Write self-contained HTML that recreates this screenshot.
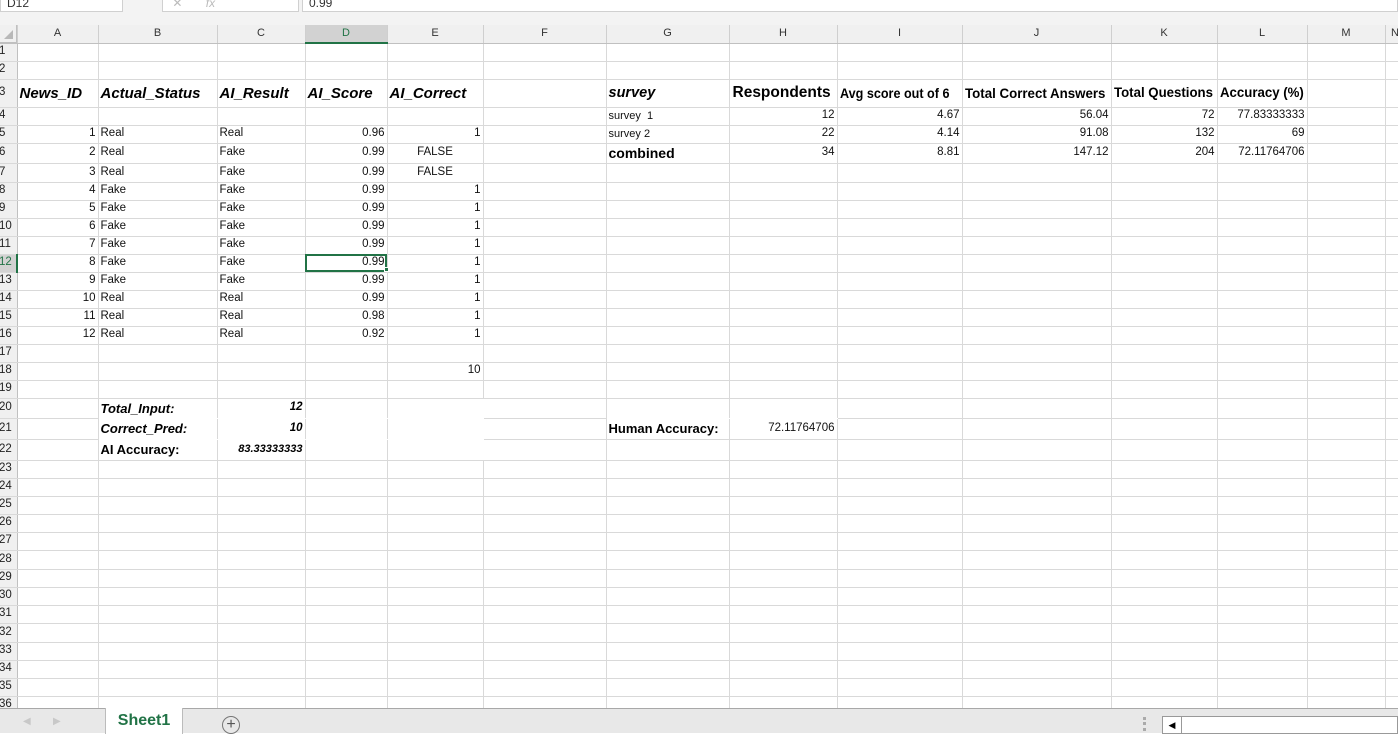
<!DOCTYPE html>
<html><head><meta charset="utf-8"><style>
*{margin:0;padding:0;box-sizing:border-box}
body{width:1398px;height:733px;overflow:hidden;background:#fff;font-family:"Liberation Sans",Arial,sans-serif;position:relative}
#top{position:absolute;left:0;top:0;width:1398px;height:25px;background:#f3f3f3}
#top .b{position:absolute;top:0;height:12px;background:#fff;border:1px solid #d0d0d0;border-top:none;font-size:12px;color:#333;line-height:6px;padding-left:6px;overflow:hidden}
table{position:absolute;left:0;top:25px;border-collapse:collapse;table-layout:fixed;width:1405px}
td{border-right:1px solid #d9d9d9;border-bottom:1px solid #d9d9d9;font-size:11.5px;color:#111;white-space:nowrap;overflow:visible;padding:0 2px;line-height:1}
tr.h td{background:#f0f0f0;text-align:center;color:#333;font-size:11px;border-right:1px solid #cfcfcf;border-bottom:1px solid #c0c0c0}
td.rh{background:#f0f0f0;font-size:11.5px;color:#222;padding:0;border-right:1px solid #c0c0c0;text-align:left;text-indent:-1px}
.r{text-align:right}
.hd{font-weight:bold;font-style:italic;font-size:15px;color:#000}
.nb{font-weight:bold;font-size:13.5px;color:#000}
.nb span{display:inline-block;transform-origin:left}
.bi{font-weight:bold;font-style:italic;font-size:13px;color:#000}
#tabs{position:absolute;left:0;top:708px;width:1398px;height:25px;background:#e8e8e8;border-top:1px solid #a8a8a8}
</style></head><body>
<div id="top">
<div class="b" style="left:0;width:123px">D12</div>
<div class="b" style="left:162px;width:137px;color:#bbb">&nbsp;✕ &nbsp;&nbsp;&nbsp;&nbsp;&nbsp; <i>fx</i></div>
<div class="b" style="left:302px;width:1096px">0.99</div>
</div>
<table>
<colgroup><col style="width:17px"><col style="width:81px"><col style="width:119px"><col style="width:88px"><col style="width:82px"><col style="width:96px"><col style="width:123px"><col style="width:123px"><col style="width:108px"><col style="width:125px"><col style="width:149px"><col style="width:106px"><col style="width:90px"><col style="width:78px"><col style="width:20px"></colgroup>
<tr class="h" style="height:18px"><td style="background:#f0f0f0"></td><td>A</td><td>B</td><td>C</td><td style="background:#d2d2d2;color:#217346;border-bottom:2px solid #217346">D</td><td>E</td><td>F</td><td>G</td><td>H</td><td>I</td><td>J</td><td>K</td><td>L</td><td>M</td><td>N</td></tr>
<tr style="height:18px"><td class="rh">1</td><td></td><td></td><td></td><td></td><td></td><td></td><td></td><td></td><td></td><td></td><td></td><td></td><td></td><td></td></tr>
<tr style="height:18px"><td class="rh">2</td><td></td><td></td><td></td><td></td><td></td><td></td><td></td><td></td><td></td><td></td><td></td><td></td><td></td><td></td></tr>
<tr style="height:28px"><td class="rh">3</td><td class="hd">News_ID</td><td class="hd">Actual_Status</td><td class="hd">AI_Result</td><td class="hd">AI_Score</td><td class="hd">AI_Correct</td><td></td><td class="hd" style="font-size:14.5px">survey</td><td class="nb" style="font-size:15.5px;padding:0 0 0 3px">Respondents</td><td class="nb"><span style="font-size:14px;transform:scaleX(.9)">Avg score out of 6</span></td><td class="nb"><span style="font-size:14px;transform:scaleX(.95)">Total Correct Answers</span></td><td class="nb"><span style="transform:scaleX(.98)">Total Questions</span></td><td class="nb"><span style="transform:scaleX(.98)">Accuracy (%)</span></td><td></td><td></td></tr>
<tr style="height:18px"><td class="rh">4</td><td></td><td></td><td></td><td></td><td></td><td></td><td style="font-size:11px">survey&nbsp; 1</td><td class="r">12</td><td class="r">4.67</td><td class="r">56.04</td><td class="r">72</td><td class="r">77.83333333</td><td></td><td></td></tr>
<tr style="height:18px"><td class="rh">5</td><td class="r">1</td><td>Real</td><td>Real</td><td class="r">0.96</td><td class="r">1</td><td></td><td style="font-size:11px">survey 2</td><td class="r">22</td><td class="r">4.14</td><td class="r">91.08</td><td class="r">132</td><td class="r">69</td><td></td><td></td></tr>
<tr style="height:20px"><td class="rh">6</td><td class="r">2</td><td>Real</td><td>Fake</td><td class="r">0.99</td><td style="text-align:center">FALSE</td><td></td><td class="nb" style="font-size:14px">combined</td><td class="r">34</td><td class="r">8.81</td><td class="r">147.12</td><td class="r">204</td><td class="r">72.11764706</td><td></td><td></td></tr>
<tr style="height:19px"><td class="rh">7</td><td class="r">3</td><td>Real</td><td>Fake</td><td class="r">0.99</td><td style="text-align:center">FALSE</td><td></td><td></td><td></td><td></td><td></td><td></td><td></td><td></td><td></td></tr>
<tr style="height:18px"><td class="rh">8</td><td class="r">4</td><td>Fake</td><td>Fake</td><td class="r">0.99</td><td class="r">1</td><td></td><td></td><td></td><td></td><td></td><td></td><td></td><td></td><td></td></tr>
<tr style="height:18px"><td class="rh">9</td><td class="r">5</td><td>Fake</td><td>Fake</td><td class="r">0.99</td><td class="r">1</td><td></td><td></td><td></td><td></td><td></td><td></td><td></td><td></td><td></td></tr>
<tr style="height:18px"><td class="rh">10</td><td class="r">6</td><td>Fake</td><td>Fake</td><td class="r">0.99</td><td class="r">1</td><td></td><td></td><td></td><td></td><td></td><td></td><td></td><td></td><td></td></tr>
<tr style="height:18px"><td class="rh">11</td><td class="r">7</td><td>Fake</td><td>Fake</td><td class="r">0.99</td><td class="r">1</td><td></td><td></td><td></td><td></td><td></td><td></td><td></td><td></td><td></td></tr>
<tr style="height:18px"><td class="rh" style="color:#217346;background:#d2d2d2;border-right:2px solid #217346">12</td><td class="r">8</td><td>Fake</td><td>Fake</td><td class="r" style="outline:2px solid #217346;outline-offset:-2px">0.99</td><td class="r">1</td><td></td><td></td><td></td><td></td><td></td><td></td><td></td><td></td><td></td></tr>
<tr style="height:18px"><td class="rh">13</td><td class="r">9</td><td>Fake</td><td>Fake</td><td class="r">0.99</td><td class="r">1</td><td></td><td></td><td></td><td></td><td></td><td></td><td></td><td></td><td></td></tr>
<tr style="height:18px"><td class="rh">14</td><td class="r">10</td><td>Real</td><td>Real</td><td class="r">0.99</td><td class="r">1</td><td></td><td></td><td></td><td></td><td></td><td></td><td></td><td></td><td></td></tr>
<tr style="height:18px"><td class="rh">15</td><td class="r">11</td><td>Real</td><td>Real</td><td class="r">0.98</td><td class="r">1</td><td></td><td></td><td></td><td></td><td></td><td></td><td></td><td></td><td></td></tr>
<tr style="height:18px"><td class="rh">16</td><td class="r">12</td><td>Real</td><td>Real</td><td class="r">0.92</td><td class="r">1</td><td></td><td></td><td></td><td></td><td></td><td></td><td></td><td></td><td></td></tr>
<tr style="height:18px"><td class="rh">17</td><td></td><td></td><td></td><td></td><td></td><td></td><td></td><td></td><td></td><td></td><td></td><td></td><td></td><td></td></tr>
<tr style="height:18px"><td class="rh">18</td><td></td><td></td><td></td><td></td><td class="r">10</td><td></td><td></td><td></td><td></td><td></td><td></td><td></td><td></td><td></td></tr>
<tr style="height:18px"><td class="rh">19</td><td></td><td></td><td></td><td></td><td></td><td></td><td></td><td></td><td></td><td></td><td></td><td></td><td></td><td></td></tr>
<tr style="height:20px"><td class="rh">20</td><td></td><td class="bi" style="border-bottom-color:#fff">Total_Input:</td><td class="bi r" style="font-size:11.5px;border-bottom-color:#fff">12</td><td style="border-bottom-color:#fff"></td><td style="border-bottom-color:#fff;border-right-color:#fff"></td><td></td><td style="border-bottom-color:#fff"></td><td style="border-bottom-color:#fff"></td><td></td><td></td><td></td><td></td><td></td><td></td></tr>
<tr style="height:21px"><td class="rh">21</td><td></td><td class="bi" style="border-bottom-color:#fff">Correct_Pred:</td><td class="bi r" style="font-size:11.5px;border-bottom-color:#fff">10</td><td style="border-bottom-color:#fff"></td><td style="border-bottom-color:#fff;border-right-color:#fff"></td><td></td><td class="nb" style="font-size:13px">Human Accuracy:</td><td class="r">72.11764706</td><td></td><td></td><td></td><td></td><td></td><td></td></tr>
<tr style="height:21px"><td class="rh">22</td><td></td><td class="nb" style="font-size:13px">AI Accuracy:</td><td class="bi r" style="font-size:11px">83.33333333</td><td></td><td style="border-right-color:#fff"></td><td></td><td></td><td></td><td></td><td></td><td></td><td></td><td></td><td></td></tr>
<tr style="height:18px"><td class="rh">23</td><td></td><td></td><td></td><td></td><td></td><td></td><td></td><td></td><td></td><td></td><td></td><td></td><td></td><td></td></tr>
<tr style="height:18px"><td class="rh">24</td><td></td><td></td><td></td><td></td><td></td><td></td><td></td><td></td><td></td><td></td><td></td><td></td><td></td><td></td></tr>
<tr style="height:18px"><td class="rh">25</td><td></td><td></td><td></td><td></td><td></td><td></td><td></td><td></td><td></td><td></td><td></td><td></td><td></td><td></td></tr>
<tr style="height:18px"><td class="rh">26</td><td></td><td></td><td></td><td></td><td></td><td></td><td></td><td></td><td></td><td></td><td></td><td></td><td></td><td></td></tr>
<tr style="height:18px"><td class="rh">27</td><td></td><td></td><td></td><td></td><td></td><td></td><td></td><td></td><td></td><td></td><td></td><td></td><td></td><td></td></tr>
<tr style="height:19px"><td class="rh">28</td><td></td><td></td><td></td><td></td><td></td><td></td><td></td><td></td><td></td><td></td><td></td><td></td><td></td><td></td></tr>
<tr style="height:18px"><td class="rh">29</td><td></td><td></td><td></td><td></td><td></td><td></td><td></td><td></td><td></td><td></td><td></td><td></td><td></td><td></td></tr>
<tr style="height:18px"><td class="rh">30</td><td></td><td></td><td></td><td></td><td></td><td></td><td></td><td></td><td></td><td></td><td></td><td></td><td></td><td></td></tr>
<tr style="height:18px"><td class="rh">31</td><td></td><td></td><td></td><td></td><td></td><td></td><td></td><td></td><td></td><td></td><td></td><td></td><td></td><td></td></tr>
<tr style="height:19px"><td class="rh">32</td><td></td><td></td><td></td><td></td><td></td><td></td><td></td><td></td><td></td><td></td><td></td><td></td><td></td><td></td></tr>
<tr style="height:18px"><td class="rh">33</td><td></td><td></td><td></td><td></td><td></td><td></td><td></td><td></td><td></td><td></td><td></td><td></td><td></td><td></td></tr>
<tr style="height:18px"><td class="rh">34</td><td></td><td></td><td></td><td></td><td></td><td></td><td></td><td></td><td></td><td></td><td></td><td></td><td></td><td></td></tr>
<tr style="height:18px"><td class="rh">35</td><td></td><td></td><td></td><td></td><td></td><td></td><td></td><td></td><td></td><td></td><td></td><td></td><td></td><td></td></tr>
<tr style="height:18px"><td class="rh">36</td><td></td><td></td><td></td><td></td><td></td><td></td><td></td><td></td><td></td><td></td><td></td><td></td><td></td><td></td></tr>
</table>
<div style="position:absolute;left:384px;top:267px;width:5px;height:5px;background:#217346;border:1px solid #fff"></div>
<div style="position:absolute;left:0;top:25px;width:17px;height:18px;background:#f0f0f0;border-right:1px solid #c0c0c0;border-bottom:1px solid #c0c0c0"><div style="position:absolute;right:3px;bottom:3px;width:0;height:0;border-left:9px solid transparent;border-bottom:9px solid #b8b8b8"></div></div>
<div id="tabs">
<span style="position:absolute;left:23px;top:7px;color:#c8c8c8;font-size:10px">◀</span>
<span style="position:absolute;left:53px;top:7px;color:#c8c8c8;font-size:10px">▶</span>
<div style="position:absolute;left:105px;top:-1px;width:78px;height:26px;background:#fff;border-left:1px solid #bbb;border-right:1px solid #bbb;color:#217346;font-weight:bold;font-size:16px;text-align:center;line-height:26px">Sheet1</div>
<div style="position:absolute;left:222px;top:7px;width:18px;height:18px;border:1.5px solid #777;border-radius:50%;text-align:center;line-height:15px;font-size:16px;color:#555">+</div>
<div style="position:absolute;left:1143px;top:8px;width:3px;height:14px;border-left:3px dotted #aaa"></div>
<div style="position:absolute;left:1162px;top:7px;width:236px;height:18px;background:#fff;border:1px solid #999"><div style="position:absolute;left:0;top:0;width:19px;height:16px;border-right:1px solid #999;font-size:9px;line-height:16px;text-align:center;color:#000">◀</div></div>
</div>
</body></html>
